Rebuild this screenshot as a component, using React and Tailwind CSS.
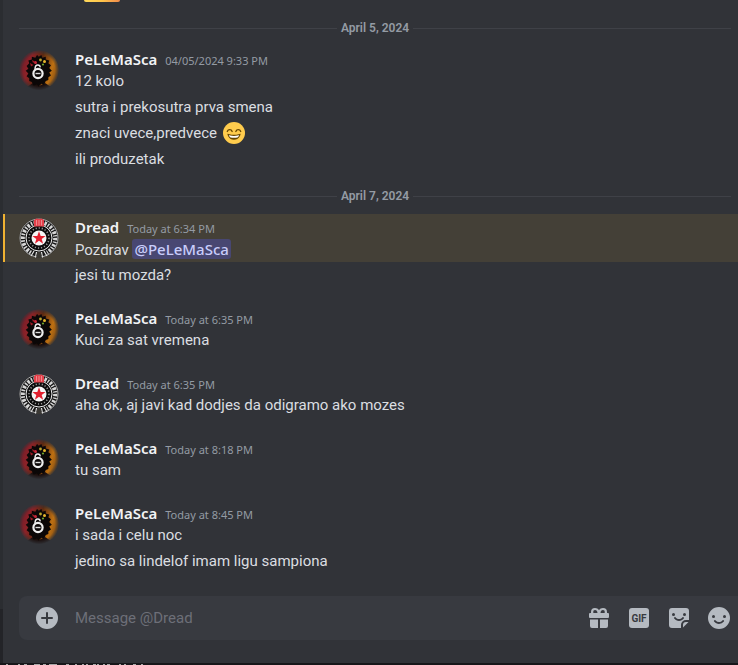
import { useState } from "react"
import { clsx } from "clsx"

const groups = [
  {
    day: "April 5, 2024",
    messages: [
      {
        author: "PeLeMaSca",
        time: "04/05/2024 9:33 PM",
        lines: ["12 kolo", "sutra i prekosutra prva smena", "znaci uvece,predvece :smile:", "ili produzetak"],
      },
    ],
  },
  {
    day: "April 7, 2024",
    messages: [
      { author: "Dread", time: "Today at 6:34 PM", lines: ["Pozdrav @PeLeMaSca", "jesi tu mozda?"] },
      { author: "PeLeMaSca", time: "Today at 6:35 PM", lines: ["Kuci za sat vremena"] },
      {
        author: "Dread",
        time: "Today at 6:35 PM",
        lines: ["aha ok, aj javi kad dodjes da odigramo ako mozes"],
      },
      { author: "PeLeMaSca", time: "Today at 8:18 PM", lines: ["tu sam"] },
      {
        author: "PeLeMaSca",
        time: "Today at 8:45 PM",
        lines: ["i sada i celu noc", "jedino sa lindelof imam ligu sampiona"],
      },
    ],
  },
]

const LionAvatar = () => (
  <svg viewBox="0 0 40 40" className="size-10" aria-hidden="true">
    <defs>
      <linearGradient id="mane" x1="0" x2="1" y1="0.3" y2="0.6">
        <stop offset="0" stopColor="#6d1b29" />
        <stop offset="0.25" stopColor="#8d2228" />
        <stop offset="0.5" stopColor="#5b2a12" />
        <stop offset="0.8" stopColor="#bd7012" />
        <stop offset="1" stopColor="#7d4a14" />
      </linearGradient>
      <radialGradient id="mane-fade">
        <stop offset="0.8" stopColor="#fff" />
        <stop offset="1" stopColor="#fff" stopOpacity="0.1" />
      </radialGradient>
      <mask id="mane-mask">
        <circle cx="20" cy="20" r="20" fill="url(#mane-fade)" />
      </mask>
    </defs>
    <g mask="url(#mane-mask)">
      <circle cx="20" cy="20" r="20" fill="url(#mane)" />
      <path d="M8 37l6-4 6 3 6-3 6 4-6 4H14z" fill="#1c100f" />
    </g>
    <path
      transform="translate(2.400 1.200) scale(.87 .93)"
      d="M18 4l2 2 3-2 1 3 4-1 0 3 4 1-1 3 3 2-2 3 3 3-3 2 2 3-3 2 0 3-3 1-2 4-3-1-3 3-3-2-3 1-2-4-3-1 0-3-3-2 2-3-3-3 3-2-2-3 3-3-1-3 4-1 0-3 4 1z"
      fill="#0b0707"
    />
    <path d="M11 13l3.500 2-2.500 1.500zM13 10l3 1.500-2 1.500z" fill="#9e1d27" />
    <circle cx="16.500" cy="12.500" r="1.500" fill="#c9283a" />
    <circle cx="21.500" cy="10" r="1.400" fill="#b8a52e" />
    <circle cx="25.500" cy="11.500" r="1.500" fill="#e7b52c" />
    <circle cx="24" cy="14.500" r="1.100" fill="#6fa52e" />
    <circle cx="19" cy="23.500" r="4.600" fill="none" stroke="#eee" strokeWidth="2.200" />
    <path d="M16.500 23.500h5" stroke="#ddd" strokeWidth="1.400" />
    <path d="M16 19.500c0-2.800 1-4.500 2.800-4.500s2.500 1.200 2.200 2.400" fill="none" stroke="#eee" strokeWidth="1.500" />
  </svg>
)

const CrestAvatar = () => (
  <svg viewBox="0 0 40 40" className="size-10" aria-hidden="true">
    <defs>
      <path id="crest-left" d="M12 34.500A16.200 16.200 0 0 1 15 5" />
      <path id="crest-right" d="M25.500 5.200A16.200 16.200 0 0 1 28 34.500" />
    </defs>
    <circle cx="20" cy="20" r="19.500" fill="#151515" />
    <circle cx="20" cy="20" r="19" fill="none" stroke="#b9b9b9" strokeWidth="1" />
    <g fill="none" stroke="#d6d6d6" strokeWidth="4">
      <use href="#crest-left" strokeDasharray="1.600 1.200 2.600 1.400" />
      <use href="#crest-right" strokeDasharray="2.400 1.300 1.400 1.300" />
    </g>
    <circle cx="20" cy="20" r="13" fill="#0d0d0d" stroke="#eee" strokeWidth="1" />
    <circle cx="20" cy="20" r="10" fill="none" stroke="#999" strokeWidth="1.600" strokeDasharray="1.200 1.900" />
    <circle cx="20" cy="20" r="7.500" fill="#f6f6f6" />
    <path d="M20 13.200l1.700 4.700h4.900l-3.900 3 1.400 4.800-4.100-2.900-4.100 2.900 1.400-4.800-3.900-3h4.900z" fill="#e3202f" />
    <path d="M15 2l2.500-1.500L20 1l2.500-.5L25 2v6.500H15z" fill="#e3404a" />
    <path d="M17.500 2v5.500M20 2v5.500M22.500 2v5.500" stroke="#f9b9bb" strokeWidth="0.600" />
    <path d="M15 33l-3 5M25 33l3 5M17.500 34l-1 5.500M22.500 34l1 5.500" stroke="#e5e5e5" strokeWidth="1.200" />
    <path d="M18.200 34h3.600l1 6h-5.600z" fill="#3a3834" />
  </svg>
)

const SmileEmoji = () => (
  <svg viewBox="0 0 36 36" role="img" aria-label="smile" className="inline-block size-[22px] align-bottom">
    <circle cx="18" cy="18" r="18" fill="#ffcc4d" />
    <path
      d="M28.500 19.200c-.2-.2-.4-.2-.7-.1 0 0-3.800 1.900-9.800 1.900s-9.800-1.900-9.800-1.900c-.3-.1-.5-.1-.7.1-.2.100-.3.400-.2.700.1.300 1.700 9.100 10.700 9.100s10.700-8.800 10.700-9.100c.1-.3 0-.5-.2-.7z"
      fill="#664500"
    />
    <path
      d="M18 23c-5 0-8-1.300-8.500-1.600.5 1.600 1.200 2.600 2 3.400 2 .6 4.200.8 6.500.8s4.500-.2 6.500-.8c.8-.8 1.500-1.800 2-3.400C26 21.700 23 23 18 23z"
      fill="#fff"
    />
    <path
      d="M7 15.500c1.500-4 6.500-4 8 0M21 15.500c1.500-4 6.500-4 8 0"
      fill="none"
      stroke="#664500"
      strokeWidth="2.200"
      strokeLinecap="round"
    />
  </svg>
)

const PlusIcon = () => (
  <svg viewBox="0 0 24 24" className="size-6" fill="#b5bac1">
    <path
      fillRule="evenodd"
      d="M12 1a11 11 0 1 0 0 22 11 11 0 0 0 0-22zm0 5a1 1 0 0 1 1 1v4h4a1 1 0 1 1 0 2h-4v4a1 1 0 1 1-2 0v-4H7a1 1 0 1 1 0-2h4V7a1 1 0 0 1 1-1z"
    />
  </svg>
)

const GiftIcon = () => (
  <svg viewBox="0 0 24 24" className="size-6" fill="#b5bac1">
    <path
      fillRule="evenodd"
      d="M4 6a4 4 0 0 1 4-4c1.700 0 3.200.9 4 2.300C12.800 2.900 14.300 2 16 2a4 4 0 0 1 4 4v1h1a1 1 0 0 1 1 1v3a1 1 0 0 1-1 1H3a1 1 0 0 1-1-1V8a1 1 0 0 1 1-1h1zm2.200 0c0 .4.1.7.3 1h4c-.1-1.700-1-3-2.500-3A1.900 1.900 0 0 0 6.200 6zm11.600 0A1.900 1.900 0 0 0 16 4c-1.500 0-2.400 1.300-2.500 3h4c.2-.3.3-.6.3-1z"
    />
    <path d="M3 13.500h8V22H5a2 2 0 0 1-2-2zM13 13.500h8V20a2 2 0 0 1-2 2h-6z" />
  </svg>
)

const StickerIcon = () => (
  <svg viewBox="0 0 24 24" className="size-6" fill="#b5bac1">
    <path
      fillRule="evenodd"
      d="M5 2h14a3 3 0 0 1 3 3v9h-3a5 5 0 0 0-5 5v3H5a3 3 0 0 1-3-3V5a3 3 0 0 1 3-3zM6.500 7a1.500 1.500 0 1 0 0 3 1.500 1.500 0 0 0 0-3zm11 0a1.500 1.500 0 1 0 0 3 1.500 1.500 0 0 0 0-3zM8.800 11.400a1 1 0 0 0-1.600 1.200c1.200 1.500 2.900 2.400 4.800 2.400s3.600-.9 4.800-2.400a1 1 0 1 0-1.600-1.200C14.400 12.400 13.200 13 12 13s-2.400-.6-3.200-1.600z"
    />
    <path d="M16 21.500V19a3 3 0 0 1 3-3h2.500z" />
  </svg>
)

const EmojiIcon = () => (
  <svg viewBox="0 0 24 24" className="size-6" fill="#b5bac1">
    <path
      fillRule="evenodd"
      d="M12 1a11 11 0 1 0 0 22 11 11 0 0 0 0-22zM6.500 9a1.500 1.500 0 1 1 0 3 1.500 1.500 0 0 1 0-3zm11 0a1.500 1.500 0 1 1 0 3 1.500 1.500 0 0 1 0-3zM7.300 14.200a1 1 0 0 1 1.400.2A4.500 4.500 0 0 0 12 16c1.300 0 2.500-.6 3.300-1.600a1 1 0 1 1 1.600 1.200A6.300 6.300 0 0 1 12 18c-1.900 0-3.700-.9-4.900-2.400a1 1 0 0 1 .2-1.400z"
    />
  </svg>
)

const MessageText = ({ text }) =>
  text.split(/(@\w+|\s?:smile:)/).map((part, i) => {
    if (part.startsWith("@")) {
      return (
        <a
          key={i}
          href="#profile"
          className="rounded-[3px] bg-[#484772] px-0.5 font-['Noto_Sans',sans-serif] font-medium text-[#c9cdfb]"
        >
          {part}
        </a>
      )
    }
    if (part.endsWith(":smile:")) {
      return (
        <span key={i} className="pl-1.5">
          <SmileEmoji />
        </span>
      )
    }
    return part
  })

const Message = ({ message }) => {
  const { author, time, lines } = message
  return (
    <article className="mt-[17px] first:mt-0">
      {lines.map((line, i) => (
        <div
          key={i}
          className={clsx(
            "flex gap-4 border-l-2 py-0.5 pl-3.5 pr-4",
            line.includes("@") ? "border-[#f0b232] bg-[#444037]" : "border-transparent"
          )}
        >
          <div className="w-10 shrink-0">
            {i === 0 && <div className="-mb-5 pt-0.5">{author === "Dread" ? <CrestAvatar /> : <LionAvatar />}</div>}
          </div>
          <div className="min-w-0">
            {i === 0 && (
              <h3 className="flex h-[22px] items-baseline gap-2 font-['Noto_Sans',sans-serif] leading-[22px]">
                <span className="font-semibold text-[#f2f3f5]">{author}</span>
                <time className="text-[11px] leading-4 text-[#949ba4]">{time}</time>
              </h3>
            )}
            <p className="h-[22px] leading-[22px] text-[#dbdee1]">
              <MessageText text={line} />
            </p>
          </div>
        </div>
      ))}
    </article>
  )
}

const DayDivider = ({ day }) => (
  <div className="mt-4 mb-2.5 ml-4 mr-[7px] flex h-4 items-center gap-1">
    <hr className="grow border-[#3f4147]" />
    <span className="text-xs font-semibold text-[#949ba4]">{day}</span>
    <hr className="grow border-[#3f4147]" />
  </div>
)

const Composer = () => {
  const [draft, setDraft] = useState("")
  return (
    <form
      className="ml-4 flex h-11 items-center rounded-l-lg bg-[#383a40] pl-4 pr-[7px]"
      onSubmit={(e) => e.preventDefault()}
    >
      <button type="button" aria-label="Add attachment">
        <PlusIcon />
      </button>
      <input
        type="text"
        aria-label="Message @Dread"
        placeholder="Message @Dread"
        value={draft}
        onChange={(e) => setDraft(e.target.value)}
        className="ml-4 min-w-0 grow bg-transparent text-[#dbdee1] outline-none placeholder:text-[#6d6f78]"
      />
      <div className="flex shrink-0 gap-4">
        <button type="button" aria-label="Send a gift">
          <GiftIcon />
        </button>
        <button type="button" className="flex size-6 items-center justify-center">
          <span className="flex size-5 items-center justify-center rounded-[3px] bg-[#b5bac1] text-[10px] font-bold text-[#383a40]">
            GIF
          </span>
        </button>
        <button type="button" aria-label="Open sticker picker">
          <StickerIcon />
        </button>
        <button type="button" aria-label="Select emoji">
          <EmojiIcon />
        </button>
      </div>
    </form>
  )
}

// sliver of whatever sits behind the window
const BackgroundEdge = () => (
  <svg className="h-0.5 w-full shrink-0 bg-[#17171a]" aria-hidden="true">
    <path
      d="M6 1.500h2M18 1.500h2M24 1.500h3M34 1.500h6M43 1.500h3M49 1.500h8M66 1.500h3M75 1.500h2M82 1.500h2M86 1.500h2M93 1.500h3M97 1.500h2M103 1.500h2M107 1.500h3M119 1.500h2M124 1.500h2M133 1.500h3M141 1.500h2"
      stroke="#a9a9a9"
    />
  </svg>
)

export default function App() {
  return (
    <div className="flex h-screen flex-col overflow-hidden bg-[#1e1f22] font-[Roboto,sans-serif] text-[15px]">
      <div className="flex min-h-0 grow">
        <div className="flex w-[3px] shrink-0 flex-col bg-[#2b2d31]">
          <div className="mt-auto h-[54px] bg-[#232428]" />
        </div>
        <main className="flex min-w-0 grow flex-col bg-[#313338]">
          <div className="min-h-0 grow overflow-hidden">
            <div className="h-1 pl-[81px]">
              <div className="h-0.5 w-9 rounded-b-sm bg-linear-to-r from-[#ffd95a] via-[#ffc54a] to-[#f08a4b]" />
            </div>
            {groups.map((group) => (
              <section key={group.day}>
                <DayDivider day={group.day} />
                <div>
                  {group.messages.map((message, i) => (
                    <Message key={i} message={message} />
                  ))}
                </div>
              </section>
            ))}
          </div>
          <div className="pb-[23px]">
            <Composer />
          </div>
        </main>
      </div>
      <BackgroundEdge />
    </div>
  )
}
